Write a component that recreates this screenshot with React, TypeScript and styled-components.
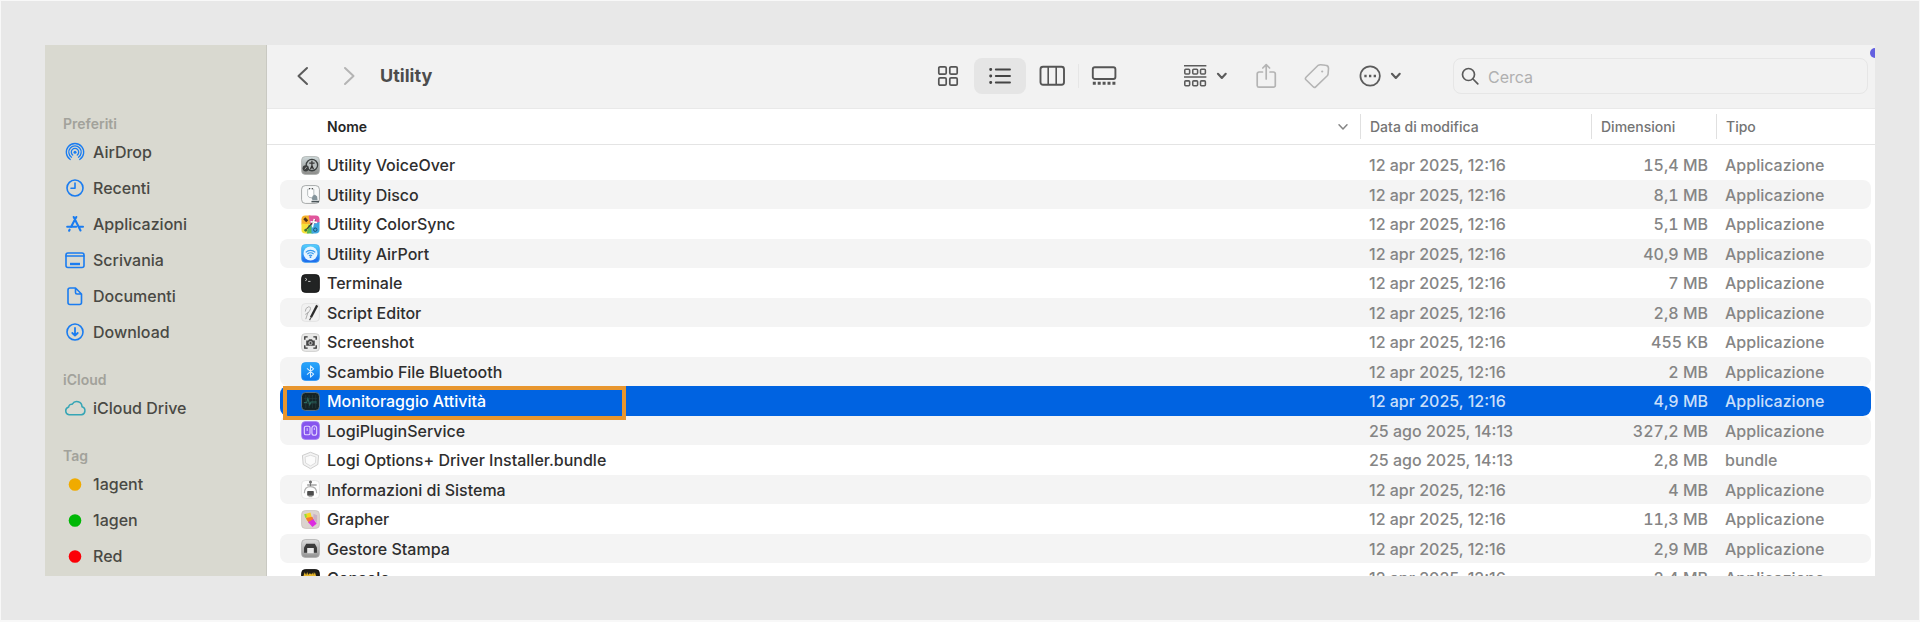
import React from 'react';
import styled, { createGlobalStyle, css } from 'styled-components';

const GlobalStyle = createGlobalStyle`
  *, *::before, *::after { box-sizing: border-box; }
  body {
    margin: 0;
    font-family: Inter, "Liberation Sans", sans-serif;
    font-size: 16px;
    color: #2b2b2b;
  }
  button {
    font: inherit;
    color: inherit;
    background: none;
    border: 0;
    padding: 0;
  }
`;

/* ---------- Layout ---------- */

const Page = styled.div`
  display: flex;
  height: 100vh;
  padding: 44px;
  background: #e8e8e8;
  border: 1px solid #f8f8f8;
  border-bottom-width: 2px;
`;

const Window = styled.div`
  position: relative;
  display: flex;
  flex: 1;
  min-width: 0;
  overflow: hidden;
  background: #ffffff;
`;

const Sidebar = styled.nav`
  flex: none;
  width: 222px;
  padding: 69px 16px 0 18px;
  overflow: hidden;
  background: #d9d9d0;
  border-right: 1px solid #c9c9c2;
`;

const Section = styled.section`
  margin-bottom: 20px;
`;

const SectionTitle = styled.h2`
  margin: 0;
  font-size: 14px;
  line-height: 20px;
  font-weight: 600;
  color: #a2a29b;
`;

const SidebarList = styled.ul`
  margin: 0;
  padding: 0;
  list-style: none;
`;

const SidebarLink = styled.a`
  display: flex;
  align-items: center;
  gap: 6px;
  height: 36px;
  color: #494944;
  font-weight: 450;
  text-decoration: none;
  white-space: nowrap;

  svg {
    flex: none;
    width: 24px;
    height: 24px;
  }
`;

const Main = styled.main`
  display: flex;
  flex-direction: column;
  flex: 1;
  min-width: 0;
`;

const Toolbar = styled.header`
  display: flex;
  align-items: center;
  flex: none;
  height: 64px;
  padding: 0 7px 2px 26px;
  background: #f2f2f2;
  border-bottom: 1px solid #e9e9e9;
  color: #555555;

  svg {
    display: block;
  }
`;

const Title = styled.h1`
  flex: 1;
  margin: 0;
  font-size: 18px;
  line-height: 24px;
  font-weight: 700;
  color: #4c4c4c;
`;

const Navigation = styled.div`
  display: flex;
  gap: 22px;
  margin-right: 17px;
`;

const ToolButton = styled.button<{ $width: number; $dim?: boolean }>`
  display: flex;
  align-items: center;
  flex: none;
  gap: 9px;
  width: ${(p) => p.$width}px;
  height: 36px;
  color: ${(p) => (p.$dim ? '#b4b4b4' : '#5c5c5c')};
`;

const Views = styled.div`
  display: flex;
  margin-right: 54px;
`;

const ViewButton = styled.button<{ $active?: boolean; $divided?: boolean }>`
  display: flex;
  align-items: center;
  justify-content: center;
  width: 52px;
  height: 36px;
  border-radius: 8px;
  ${(p) => p.$active && css`background: #e5e5e5;`}
  ${(p) =>
    p.$divided &&
    css`
      border-radius: 0;
      background: linear-gradient(#e6e6e6, #e6e6e6) left center / 1px 24px no-repeat;
    `}
`;

const Actions = styled.div`
  display: flex;
  gap: 26px;
  margin-right: 51px;
`;

const Search = styled.label`
  display: flex;
  align-items: center;
  gap: 9px;
  flex: none;
  width: 415px;
  height: 36px;
  padding: 0 7px;
  border: 1px solid #e6e6e6;
  border-radius: 8px;
`;

const SearchInput = styled.input`
  flex: 1;
  min-width: 0;
  padding: 3px 0 0;
  border: 0;
  outline: 0;
  background: none;
  font: inherit;
  line-height: 20px;

  &::placeholder {
    color: #b0b0b0;
    opacity: 1;
  }
`;

const Indicator = styled.span`
  position: absolute;
  top: 3px;
  right: -5px;
  width: 10px;
  height: 10px;
  border-radius: 50%;
  background: #6360e0;
`;

/* ---------- File table ---------- */

const ListArea = styled.div`
  flex: 1;
  min-height: 0;
  overflow: hidden;
`;

const Table = styled.table`
  width: 100%;
  table-layout: fixed;
  border-collapse: separate;
  border-spacing: 0;
  white-space: nowrap;

  tbody::before {
    content: '';
    display: table-row;
    height: 5px;
  }
`;

const Column = styled.col<{ $width?: number }>`
  width: ${(p) => (p.$width ? `${p.$width}px` : 'auto')};
`;

const HeadCell = styled.th<{ $sorted?: boolean }>`
  height: 36px;
  padding: 0;
  border-bottom: 1px solid #e4e4e4;
  font-size: 14px;
  font-weight: ${(p) => (p.$sorted ? 600 : 450)};
  color: ${(p) => (p.$sorted ? '#262626' : '#747474')};
  text-align: left;
`;

const SortButton = styled.button<{ $sorted?: boolean }>`
  display: flex;
  align-items: center;
  justify-content: space-between;
  width: 100%;
  height: 25px;
  padding: ${(p) => (p.$sorted ? '0 11px 0 60px' : '0 0 0 9px')};
  border-left: ${(p) => (p.$sorted ? '0' : '1px solid #e0e0e0')};

  svg {
    color: #858585;
  }
`;

const Cell = styled.td<{ $right?: boolean }>`
  padding: ${(p) => (p.$right ? '0 8px 0 0' : '0 0 0 9px')};
  text-align: ${(p) => (p.$right ? 'right' : 'left')};
  line-height: 20px;
  font-weight: 450;
  font-variant-numeric: ${(p) => (p.$right ? 'tabular-nums' : 'normal')};
  color: #858585;
  background-clip: padding-box;

  &:last-child {
    border-right: 4px solid transparent;
    border-radius: 0 12px 12px 0 / 0 8px 8px 0;
  }
`;

const NameCell = styled(Cell)`
  position: relative;
  padding: 0 0 0 21px;
  color: #2e2e2e;
  border-left: 13px solid transparent;
  border-radius: 21px 0 0 21px / 8px 0 0 8px;
`;

const Row = styled.tr<{ $striped: boolean; $selected?: boolean }>`
  height: ${(p) => (p.$striped ? 29 : 30)}px;

  ${(p) => p.$striped && css`td { background-color: #f4f4f4; }`}
  ${(p) =>
    p.$selected &&
    css`
      td { background-color: #0063e1; color: #c9dffa; }
      ${NameCell} { color: #ffffff; font-weight: 500; }
    `}
`;

const FileName = styled.div`
  display: flex;
  align-items: center;
  gap: 7px;

  svg {
    flex: none;
    width: 19px;
    height: 19px;
  }
`;

const Highlight = styled.span`
  position: absolute;
  top: 0;
  left: 3px;
  width: 343px;
  height: 34px;
  border: 4px solid #e8962e;
  z-index: 1;
`;

/* ---------- Toolbar icons ---------- */

const Chevron = ({ left }: { left?: boolean }) => (
  <svg width="24" height="24" viewBox="0 0 24 24" fill="none" stroke="currentColor" strokeWidth="2" strokeLinecap="round" strokeLinejoin="round">
    <path d={left ? 'M14 4 5.500 12 14 20' : 'M6 4 14.500 12 6 20'} />
  </svg>
);

const DownChevron = ({ thin }: { thin?: boolean }) => (
  <svg width="12" height="8" viewBox="0 0 12 8" fill="none" stroke="currentColor" strokeWidth={thin ? 1.5 : 2.2} strokeLinecap="round" strokeLinejoin="round">
    <path d="M2 1.800 6 6 10 1.800" />
  </svg>
);

const GridIcon = () => (
  <svg width="22" height="22" viewBox="0 0 22 22" fill="none" stroke="currentColor" strokeWidth="1.700">
    <rect x="1.800" y="1.800" width="7.400" height="7.400" rx="1.300" />
    <rect x="12.800" y="1.800" width="7.400" height="7.400" rx="1.300" />
    <rect x="1.800" y="12.800" width="7.400" height="7.400" rx="1.300" />
    <rect x="12.800" y="12.800" width="7.400" height="7.400" rx="1.300" />
  </svg>
);

const ListIcon = () => (
  <svg width="22" height="18" viewBox="0 0 22 18" stroke="#444" strokeWidth="1.900" strokeLinecap="round">
    <path d="M6.800 2.500H21M6.800 9H21M6.800 15.500H21" />
    <path d="M1.600 2.500h.2M1.600 9h.2M1.600 15.500h.2" strokeWidth="2.800" />
  </svg>
);

const ColumnsIcon = () => (
  <svg width="26" height="22" viewBox="0 0 26 22" fill="none" stroke="currentColor" strokeWidth="1.900">
    <rect x="1.500" y="1.800" width="23.500" height="18" rx="2.500" />
    <path d="M9.200 2v18M17.200 2v18" strokeWidth="1.600" />
  </svg>
);

const GalleryIcon = () => (
  <svg width="26" height="22" viewBox="0 0 26 22" fill="none" stroke="currentColor" strokeWidth="1.900">
    <rect x="1.800" y="2.200" width="22.600" height="11.800" rx="2" />
    <path d="M1.800 18.200h3M6.700 18.200h3M11.600 18.200h3M16.500 18.200h3M21.400 18.200h3" strokeWidth="3" />
  </svg>
);

const GroupIcon = () => (
  <svg width="24" height="24" viewBox="0 0 24 24" fill="none" stroke="currentColor" strokeWidth="1.600">
    <path d="M0 1.500h23M0 13h23" />
    {[0.8, 9, 17].map((x) => (
      <React.Fragment key={x}>
        <rect x={x} y="5" width="5" height="5" rx="1" />
        <rect x={x} y="17" width="5" height="5" rx="1" />
      </React.Fragment>
    ))}
  </svg>
);

const ShareIcon = () => (
  <svg width="24" height="26" viewBox="0 0 24 26" fill="none" stroke="currentColor" strokeWidth="1.700" strokeLinecap="round" strokeLinejoin="round">
    <path d="M8.500 9H5a1.800 1.800 0 0 0-1.800 1.800v11.700A1.800 1.800 0 0 0 5 24.200h14.500a1.800 1.800 0 0 0 1.800-1.800V10.800A1.800 1.800 0 0 0 19.500 9H16" />
    <path d="M12.200 16V2M8.800 5 12.200 1.700 15.600 5" />
  </svg>
);

const TagIcon = () => (
  <svg width="26" height="26" viewBox="0 0 26 26" fill="none" stroke="currentColor" strokeWidth="1.600" strokeLinejoin="round">
    <path d="M14.200 2.300 2 14.300q-1.200 1.200 0 2.500l7.200 7q1.200 1.200 2.500 0L23 13q.9-.9 1.100-2.200l.4-5.600q0-2.800-3-3l-4.800-.5q-1.400-.1-2.500.6Z" />
    <circle cx="18.200" cy="8.500" r="1.100" fill="currentColor" stroke="none" />
  </svg>
);

const MoreIcon = () => (
  <svg width="24" height="24" viewBox="0 0 24 24" fill="none" stroke="currentColor" strokeWidth="1.800">
    <circle cx="12.500" cy="12" r="10" />
    <path d="M6.500 12h2.400M11.300 12h2.400M16.100 12h2.400" strokeWidth="2.400" />
  </svg>
);

const SearchIcon = () => (
  <svg width="18" height="18" viewBox="0 0 18 18" fill="none" stroke="#5a5a5a" strokeWidth="1.700" strokeLinecap="round">
    <circle cx="7.500" cy="7.500" r="6" />
    <path d="m12 12 4.800 4.800" />
  </svg>
);

/* ---------- Sidebar icons ---------- */

const BlueIcon = ({ children, color = '#1a7cf0' }: { children: React.ReactNode; color?: string }) => (
  <svg viewBox="0 0 24 24" fill="none" stroke={color} strokeWidth="1.600" strokeLinecap="round" strokeLinejoin="round">
    {children}
  </svg>
);

const AirDropIcon = () => (
  <BlueIcon>
    <g strokeWidth="1.300">
      <path d="M7.300 19.500a8.700 8.700 0 1 1 9.400 0" />
      <path d="M8.500 17.200a6.200 6.200 0 1 1 7 0" />
      <path d="M9.700 15a3.700 3.700 0 1 1 4.600 0" />
    </g>
    <circle cx="12" cy="12.300" r="1.500" fill="#1a7cf0" stroke="none" />
  </BlueIcon>
);

const ClockIcon = () => (
  <BlueIcon>
    <circle cx="12" cy="12" r="8" />
    <path d="M12 7v5.300H8" />
  </BlueIcon>
);

const AppsIcon = () => (
  <BlueIcon>
    <path d="M10.700 5 17.500 18.500M13.300 5 8 15M6.600 17.700l-.5 1M4.200 14.800h9M16 14.800h4" strokeWidth="2.100" />
  </BlueIcon>
);

const DesktopIcon = () => (
  <BlueIcon>
    <rect x="3" y="5" width="18" height="14.500" rx="2" />
    <path d="M3 8h18" strokeWidth="1.500" />
    <path d="M7 16h10" strokeWidth="2.400" strokeLinecap="butt" />
  </BlueIcon>
);

const DocumentIcon = () => (
  <BlueIcon>
    <path d="M12.500 4H7a2 2 0 0 0-2 2v12.500a2 2 0 0 0 2 2h9.500a2 2 0 0 0 2-2V10ZM12.500 4v4.500a1.500 1.500 0 0 0 1.500 1.500h4.500" />
  </BlueIcon>
);

const DownloadIcon = () => (
  <BlueIcon>
    <circle cx="12" cy="12" r="8" />
    <path d="M12 8v7.500M9.300 13 12 15.700 14.700 13" strokeWidth="1.800" />
  </BlueIcon>
);

const CloudIcon = () => (
  <BlueIcon color="#35a5b5">
    <path d="M6 18.800a4 4 0 0 1-.3-7.800 3 3 0 0 1 3.600-2.800 5.200 5.200 0 0 1 9.700 2.600 4.100 4.100 0 0 1-.7 8Z" strokeWidth="1.500" />
  </BlueIcon>
);

const Dot = ({ color }: { color: string }) => (
  <svg viewBox="0 0 24 24">
    <circle cx="12" cy="12.500" r="6.300" fill={color} />
  </svg>
);

/* ---------- Application icons ---------- */

const Tile = ({ fill, edge, children }: { fill: string; edge?: string; children?: React.ReactNode }) => (
  <svg viewBox="0 0 20 20" fill="none">
    <rect x=".6" y=".6" width="18.800" height="18.800" rx="4" fill={fill} stroke={edge || fill} strokeWidth=".8" />
    {children}
  </svg>
);

const VoiceOverIcon = () => (
  <Tile fill="url(#voiceover)" edge="#a9adac">
    <defs>
      <linearGradient id="voiceover" x2="0" y2="1">
        <stop stopColor="#cfd9da" />
        <stop offset="1" stopColor="#8b8b89" />
      </linearGradient>
    </defs>
    <circle cx="11.500" cy="9.500" r="6" fill="#b9bfbf" stroke="#3c4040" strokeWidth="1.400" />
    <path d="M11.500 5v8M8.700 7.500h5.600M10 14l1.500-4 1.600 4" stroke="#333" strokeWidth="1.300" />
    <circle cx="5" cy="13" r="3.300" fill="#3c3e3e" />
    <path d="M4 14l2-2.500" stroke="#aaa" />
  </Tile>
);

const DiskIcon = () => (
  <Tile fill="#f7f8f8" edge="#8e9191">
    <path d="M7 4.500q2.500-1.500 6.500 0v5.500l-1.500 3.500-3.500-.5-1.500-2Z" fill="#fff" stroke="#b3b9bc" />
    <path d="M8.500 3.800h1M11.500 3.800h1" stroke="#444" strokeWidth="1.200" />
    <path d="M11.500 14l1-2.500 2-1.500 2.500 2 .5 4h-5.500Z" fill="#84949b" />
    <path d="M11 17.500h8" stroke="#4a5458" strokeWidth="1.600" />
  </Tile>
);

const ColorSyncIcon = () => (
  <svg viewBox="0 0 20 20" fill="none">
    <defs>
      <clipPath id="syncclip"><rect x=".5" y=".5" width="19" height="19" rx="4" /></clipPath>
    </defs>
    <g clipPath="url(#syncclip)">
      <path fill="#f5b22c" d="M0 0h10v10H0z" />
      <path fill="#e0559c" d="M8 0h12v8l-10 3Z" />
      <path fill="#f6e23a" d="M0 9l10 1-2 10H0z" />
      <path fill="#56b85a" d="M8 10l5 2v8H6z" />
      <path fill="#3ea7e0" d="m11 10 9-3v13h-9z" />
      <path d="m3.500 3.500 3 3" stroke="#4a3117" strokeWidth="3" />
      <path d="M5 16 15 5" stroke="#3c3c33" strokeWidth="1.200" />
      <path d="m14 4-2 9M10 7l7 1" stroke="#fff" strokeWidth="1.600" />
      <circle cx="5" cy="16" r="1.500" fill="#3f7a2d" />
      <circle cx="15" cy="15.500" r="1.800" stroke="#1c4f74" strokeWidth="1" />
    </g>
  </svg>
);

const AirPortIcon = () => (
  <Tile fill="url(#airport)" edge="#47a9f0">
    <defs>
      <linearGradient id="airport" x2="0" y2="1">
        <stop stopColor="#55d3fb" />
        <stop offset="1" stopColor="#1c66ec" />
      </linearGradient>
    </defs>
    <circle cx="10" cy="10" r="7.300" fill="#e5f4ff" />
    <path d="M5 8.800a7 7 0 0 1 10 0M6.700 10.700a4.700 4.700 0 0 1 6.600 0M8.400 12.500a2.300 2.300 0 0 1 3.200 0" stroke="#3498ed" strokeWidth="1.300" />
    <circle cx="10" cy="13.800" r="1" fill="#2c84e8" />
  </Tile>
);

const TerminalIcon = () => (
  <Tile fill="#222424" edge="#0b0b0b">
    <path d="m4.500 4.500 1.800 1.300-1.800 1.300M7.500 7.800h2.500" stroke="#e3e3e3" strokeWidth=".9" />
  </Tile>
);

const ScriptIcon = () => (
  <Tile fill="#f1f1f1" edge="#dedede">
    <path d="M4.500 9q0-4 3.500-5 3 0 1.500 3.500-2 4-5 4.500M7.500 9.500 5 17" stroke="#a9a9a9" strokeWidth="1" />
    <path d="M17 2.500 10.500 15" stroke="#2b2b2b" strokeWidth="2.400" />
    <path d="M11 14.500 9 18" stroke="#555" strokeWidth="1.200" />
  </Tile>
);

const ScreenshotIcon = () => (
  <Tile fill="#e9e9e8" edge="#c8c8c6">
    <path d="M4 7V4h3M13 4h3v3M16 13v3h-3M7 16H4v-3" stroke="#343434" strokeWidth="1.400" />
    <path d="M5.500 8h2L8.500 6.500h3l1 1.500h2v5.500h-9Z" fill="#454545" />
    <circle cx="10" cy="10.600" r="1.700" stroke="#ddd" strokeWidth=".9" />
  </Tile>
);

const BluetoothIcon = () => (
  <Tile fill="url(#bluetooth)" edge="#2395f3">
    <defs>
      <linearGradient id="bluetooth" x2="0" y2="1">
        <stop stopColor="#2aa8fb" />
        <stop offset="1" stopColor="#0c78ee" />
      </linearGradient>
    </defs>
    <path d="m6.300 6.800 7 6-3.300 3.200V4l3.300 3.200-7 6" stroke="#d9efff" strokeWidth="1.100" strokeLinejoin="round" />
  </Tile>
);

const ActivityIcon = () => (
  <Tile fill="#152325" edge="#74858b">
    <path d="M5 3v14M8.500 3v14M12 3v14M15.500 3v14M3 7h14M3 12h14" stroke="#254043" strokeWidth=".7" />
    <path d="M3 11h3l1.200-4 2 6.500 1.300-3h6" stroke="#2c6c62" strokeWidth="1.100" />
  </Tile>
);

const LogiPluginIcon = () => (
  <Tile fill="#8655ee" edge="#a37ff4">
    <rect x="3.500" y="5.500" width="6" height="9" rx="1.700" stroke="#e2d5ff" strokeWidth="1.200" />
    <rect x="11.500" y="5" width="5" height="10" rx="2.500" stroke="#e2d5ff" strokeWidth="1.200" />
    <path d="M6.500 7.500v3M14 7v2.500" stroke="#e2d5ff" strokeWidth="1" />
  </Tile>
);

const BundleIcon = () => (
  <svg viewBox="0 0 20 20" fill="none" strokeLinejoin="round">
    <path d="m10 1.300 8.500 3.400-.8 9.500L10 18.700l-7.700-4.500-.8-9.500Z" fill="#f3f3f3" stroke="#c6c6c6" strokeWidth=".9" />
    <path d="m10 4.500 5.700 1.800-.6 6.400-5.100 3-5.100-3-.6-6.400Z" fill="#fbfbfb" stroke="#d7d7d7" strokeWidth=".9" />
  </svg>
);

const SystemInfoIcon = () => (
  <Tile fill="#fdfdfd" edge="#dfdfdf">
    <circle cx="10" cy="2.200" r="1.600" fill="#6c6c6c" />
    <path d="M10 3v4M6.500 5.200h10" stroke="#777" strokeWidth="1.100" />
    <path d="M3.500 14q0-7 6.500-7t6.500 7" stroke="#b0b0b0" strokeWidth="1.200" />
    <rect x="6.500" y="11.500" width="7" height="5" rx=".8" fill="#4d4d4d" />
    <path d="M8 17.500h4" stroke="#999" />
  </Tile>
);

const GrapherIcon = () => (
  <Tile fill="#dcd3cf" edge="#c8c0bc">
    <path d="M3.500 4.500 10 2.500l1.500 6-5 3Z" fill="#f7d521" />
    <path d="m5 8.500 7-1.500 1.500 3.500L8.500 14Z" fill="#f37a33" />
    <path d="m7.500 13 5.500-3.500 3.500 5-4.500 3.500Z" fill="#dc2ce0" />
    <path d="m3.500 4.500 2-.6.6 3.500-1.600.9Z" fill="#8fdc3d" />
    <path d="m13 4 4 1.500v9L13 9Z" fill="#cbb0c4" />
  </Tile>
);

const PrinterIcon = () => (
  <Tile fill="url(#printer)" edge="#aaaaaa">
    <defs>
      <linearGradient id="printer" x2="0" y2="1">
        <stop stopColor="#dedede" />
        <stop offset="1" stopColor="#929292" />
      </linearGradient>
    </defs>
    <path d="M5.500 5h9l2.300 4v5.500H3.200V9Z" fill="#3b3b3b" />
    <path d="M6.500 9.500h7V15h-7Z" fill="#e7e7e7" />
  </Tile>
);

const ConsoleIcon = () => (
  <Tile fill="#1e1c17" edge="#000000">
    <path d="m3 8 1-3 1.500 3 1-3 1 3 1.500-3v3l1.500-3v3l2-3 .5 3 1.500-3 1 3" stroke="#e4b52c" strokeWidth="1.200" />
    <path d="M3 11h12" stroke="#b59a3c" strokeWidth="1.200" />
  </Tile>
);

/* ---------- Data ---------- */

const sections = [
  {
    title: 'Preferiti',
    items: [
      { label: 'AirDrop', icon: <AirDropIcon /> },
      { label: 'Recenti', icon: <ClockIcon /> },
      { label: 'Applicazioni', icon: <AppsIcon /> },
      { label: 'Scrivania', icon: <DesktopIcon /> },
      { label: 'Documenti', icon: <DocumentIcon /> },
      { label: 'Download', icon: <DownloadIcon /> },
    ],
  },
  { title: 'iCloud', items: [{ label: 'iCloud Drive', icon: <CloudIcon /> }] },
  {
    title: 'Tag',
    items: [
      { label: '1agent', icon: <Dot color="#f0ab00" /> },
      { label: '1agen', icon: <Dot color="#00b806" /> },
      { label: 'Red', icon: <Dot color="#fb0007" /> },
    ],
  },
];

const april = '12 apr 2025, 12:16';
const august = '25 ago 2025, 14:13';

const files = [
  { name: 'Utility VoiceOver', icon: <VoiceOverIcon />, date: april, size: '15,4 MB', type: 'Applicazione' },
  { name: 'Utility Disco', icon: <DiskIcon />, date: april, size: '8,1 MB', type: 'Applicazione' },
  { name: 'Utility ColorSync', icon: <ColorSyncIcon />, date: april, size: '5,1 MB', type: 'Applicazione' },
  { name: 'Utility AirPort', icon: <AirPortIcon />, date: april, size: '40,9 MB', type: 'Applicazione' },
  { name: 'Terminale', icon: <TerminalIcon />, date: april, size: '7 MB', type: 'Applicazione' },
  { name: 'Script Editor', icon: <ScriptIcon />, date: april, size: '2,8 MB', type: 'Applicazione' },
  { name: 'Screenshot', icon: <ScreenshotIcon />, date: april, size: '455 KB', type: 'Applicazione' },
  { name: 'Scambio File Bluetooth', icon: <BluetoothIcon />, date: april, size: '2 MB', type: 'Applicazione' },
  { name: 'Monitoraggio Attività', icon: <ActivityIcon />, date: april, size: '4,9 MB', type: 'Applicazione', selected: true },
  { name: 'LogiPluginService', icon: <LogiPluginIcon />, date: august, size: '327,2 MB', type: 'Applicazione' },
  { name: 'Logi Options+ Driver Installer.bundle', icon: <BundleIcon />, date: august, size: '2,8 MB', type: 'bundle' },
  { name: 'Informazioni di Sistema', icon: <SystemInfoIcon />, date: april, size: '4 MB', type: 'Applicazione' },
  { name: 'Grapher', icon: <GrapherIcon />, date: april, size: '11,3 MB', type: 'Applicazione' },
  { name: 'Gestore Stampa', icon: <PrinterIcon />, date: april, size: '2,9 MB', type: 'Applicazione' },
  { name: 'Console', icon: <ConsoleIcon />, date: april, size: '2,4 MB', type: 'Applicazione' },
];

export default function App() {
  return (
    <Page>
      <GlobalStyle />
      <Window>
        <Sidebar>
          {sections.map((section) => (
            <Section key={section.title}>
              <SectionTitle>{section.title}</SectionTitle>
              <SidebarList>
                {section.items.map((item) => (
                  <li key={item.label}>
                    <SidebarLink href="#">
                      {item.icon}
                      {item.label}
                    </SidebarLink>
                  </li>
                ))}
              </SidebarList>
            </Section>
          ))}
        </Sidebar>

        <Main>
          <Toolbar>
            <Navigation>
              <ToolButton $width={24} aria-label="Indietro"><Chevron left /></ToolButton>
              <ToolButton $width={24} $dim aria-label="Avanti"><Chevron /></ToolButton>
            </Navigation>
            <Title>Utility</Title>
            <Views>
              <ViewButton aria-label="Icone"><GridIcon /></ViewButton>
              <ViewButton $active aria-label="Elenco"><ListIcon /></ViewButton>
              <ViewButton aria-label="Colonne"><ColumnsIcon /></ViewButton>
              <ViewButton $divided aria-label="Galleria"><GalleryIcon /></ViewButton>
            </Views>
            <Actions>
              <ToolButton $width={44} aria-label="Raggruppa"><GroupIcon /><DownChevron /></ToolButton>
              <ToolButton $width={24} $dim aria-label="Condividi"><ShareIcon /></ToolButton>
              <ToolButton $width={28} $dim aria-label="Modifica tag"><TagIcon /></ToolButton>
              <ToolButton $width={44} aria-label="Altro"><MoreIcon /><DownChevron /></ToolButton>
            </Actions>
            <Search>
              <SearchIcon />
              <SearchInput type="text" placeholder="Cerca" aria-label="Cerca" />
            </Search>
          </Toolbar>

          <ListArea>
            <Table>
              <colgroup>
                <Column />
                <Column $width={231} />
                <Column $width={125} />
                <Column $width={159} />
              </colgroup>
              <thead>
                <tr>
                  <HeadCell scope="col" $sorted>
                    <SortButton $sorted>Nome<DownChevron thin /></SortButton>
                  </HeadCell>
                  <HeadCell scope="col"><SortButton>Data di modifica</SortButton></HeadCell>
                  <HeadCell scope="col"><SortButton>Dimensioni</SortButton></HeadCell>
                  <HeadCell scope="col"><SortButton>Tipo</SortButton></HeadCell>
                </tr>
              </thead>
              <tbody>
                {files.map((file, index) => (
                  <Row key={file.name} $striped={index % 2 === 1} $selected={file.selected}>
                    <NameCell>
                      <FileName>{file.icon}{file.name}</FileName>
                      {file.selected && <Highlight />}
                    </NameCell>
                    <Cell>{file.date}</Cell>
                    <Cell $right>{file.size}</Cell>
                    <Cell>{file.type}</Cell>
                  </Row>
                ))}
              </tbody>
            </Table>
          </ListArea>
        </Main>
        <Indicator />
      </Window>
    </Page>
  );
}
